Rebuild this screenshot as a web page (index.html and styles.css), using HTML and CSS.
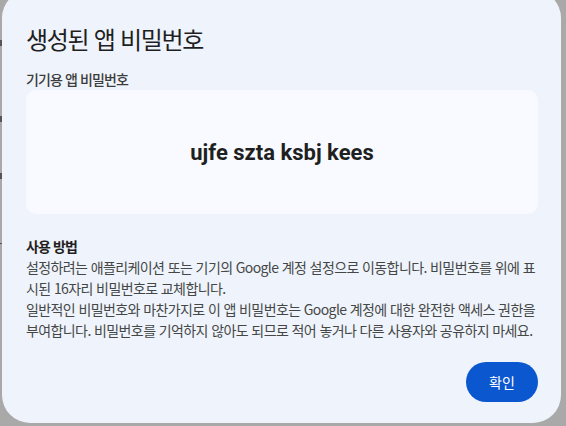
FILE: index.html
```html
<!DOCTYPE html>
<html lang="ko">
<head>
<meta charset="utf-8">
<link rel="stylesheet" href="styles.css">
</head>
<body>
<div class="backdrop">
  <span class="bg-mark m1"></span>
  <span class="bg-mark m2"></span>
  <span class="bg-mark m3"></span>
  <span class="bg-line"></span>
  <div class="dialog">
    <h1 class="title">생성된 앱 비밀번호</h1>
    <div class="label">기기용 앱 비밀번호</div>
    <div class="pwbox"><span class="pw">ujfe szta ksbj kees</span></div>
    <div class="howto">
      <div class="howto-title">사용 방법</div>
      <p class="howto-text">설정하려는 애플리케이션 또는 기기의 Google 계정 설정으로 이동합니다. 비밀번호를 위에 표시된 16자리 비밀번호로 교체합니다.<br>일반적인 비밀번호와 마찬가지로 이 앱 비밀번호는 Google 계정에 대한 완전한 액세스 권한을 부여합니다. 비밀번호를 기억하지 않아도 되므로 적어 놓거나 다른 사용자와 공유하지 마세요.</p>
    </div>
    <div class="actions"><button class="btn">확인</button></div>
  </div>
</div>
</body>
</html>
```
FILE: styles.css
```css
html, body {
  margin: 0;
  padding: 0;
  width: 566px;
  height: 426px;
  overflow: hidden;
  background: #a9a9a9;
}
.backdrop {
  position: relative;
  width: 566px;
  height: 426px;
  overflow: hidden;
  font-family: "Noto Sans CJK KR", "Noto Sans", sans-serif;
}
.bg-mark {
  position: absolute;
  left: 0;
  width: 2px;
  height: 6px;
  background: #555;
}
.m1 { top: 40px; }
.m2 { top: 116px; }
.m3 { top: 173px; }
.bg-line {
  position: absolute;
  left: 0;
  top: 243px;
  width: 2px;
  height: 1px;
  background: #555;
}
.dialog {
  position: absolute;
  left: 2px;
  top: -10px;
  width: 559px;
  height: 433px;
  box-sizing: border-box;
  padding: 33px 23px 0 24px;
  background: #eff3fb;
  border-radius: 28px;
  display: flex;
  flex-direction: column;
}
.title {
  margin: 0;
  font-size: 24px;
  line-height: 32px;
  font-weight: 400;
  letter-spacing: -1.3px;
  color: #1f1f1f;
}
.label {
  margin-top: 14px;
  font-size: 14px;
  line-height: 20px;
  font-weight: 500;
  letter-spacing: -0.9px;
  color: #3c3c3c;
}
.pwbox {
  margin-top: 1px;
  height: 124px;
  background: #f8faff;
  border-radius: 10px;
  display: flex;
  align-items: center;
  justify-content: center;
}
.pw {
  font-family: Roboto, "Noto Sans", sans-serif;
  font-weight: 700;
  font-size: 22px;
  color: #1f1f1f;
}
.howto {
  margin-top: 22px;
  color: #444746;
}
.howto-title {
  font-size: 14px;
  line-height: 20px;
  font-weight: 700;
  letter-spacing: -0.9px;
  color: #1f1f1f;
}
.howto-text {
  margin: 1px 0 0;
  font-size: 14px;
  line-height: 21px;
  letter-spacing: -0.6px;
  word-break: break-all;
  color: #444746;
}
.actions {
  margin-top: 21px;
  display: flex;
  justify-content: flex-end;
}
.btn {
  width: 72px;
  height: 40px;
  border: none;
  border-radius: 20px;
  background: #0b57d0;
  color: #fff;
  font-family: "Noto Sans CJK KR", sans-serif;
  font-size: 14px;
  font-weight: 400;
  padding: 0;
}
```
